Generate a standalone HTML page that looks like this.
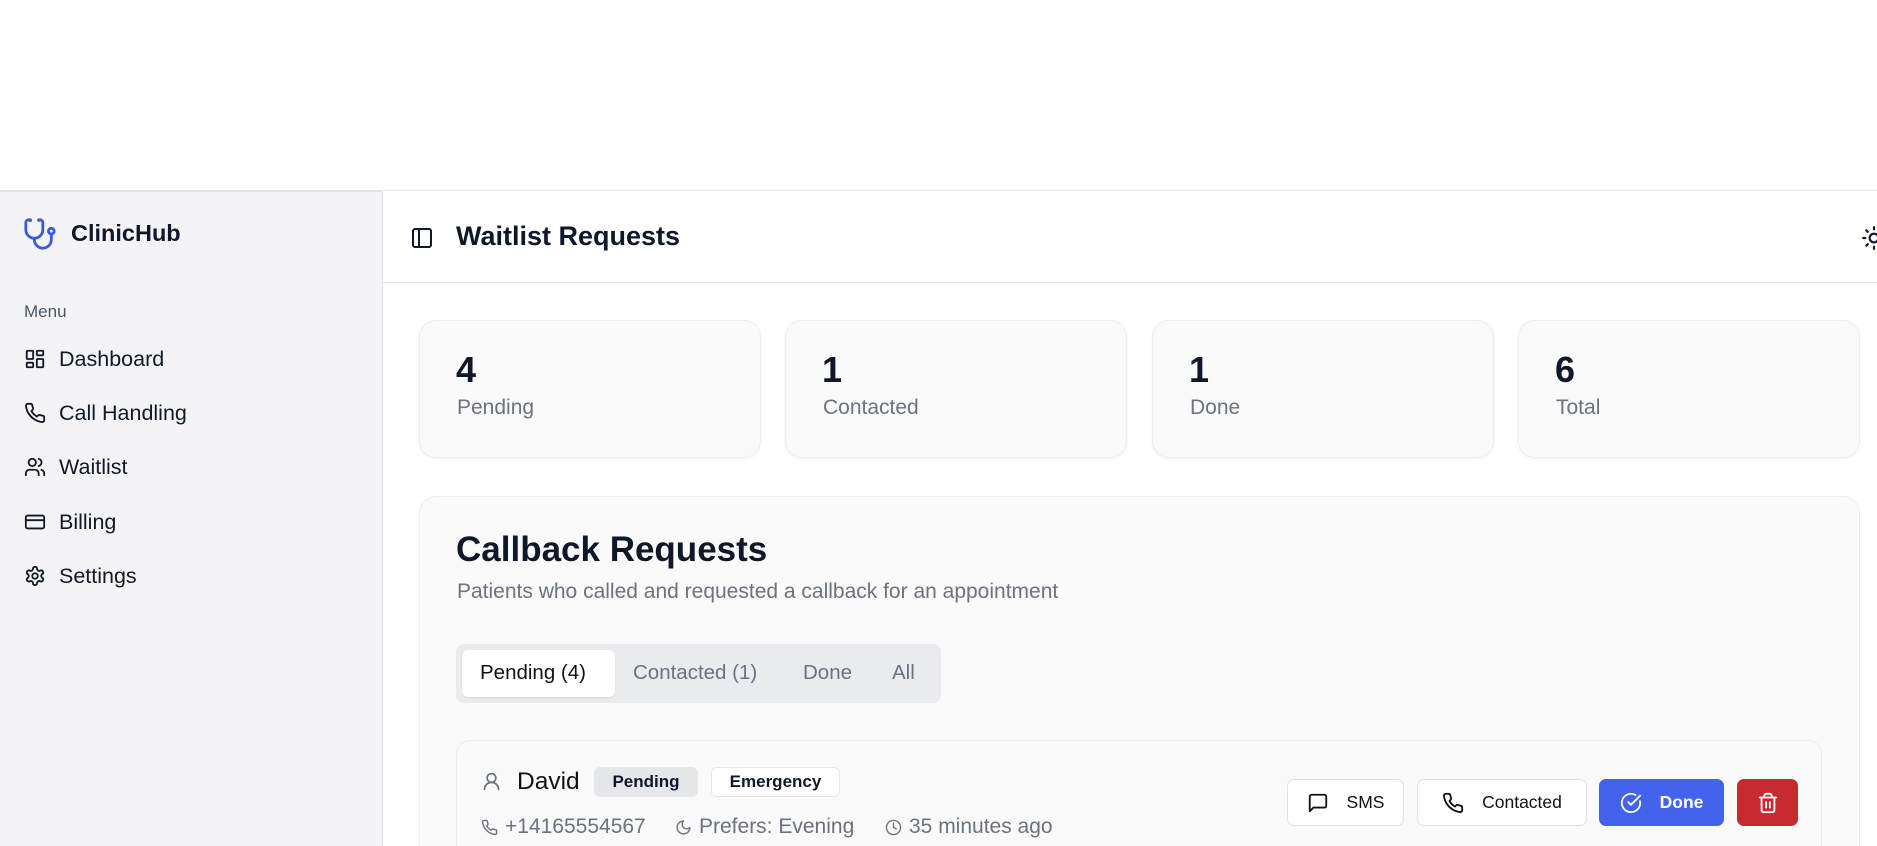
<!DOCTYPE html>
<html style="overflow:hidden;height:846px"><head><meta charset="utf-8"><style>
*{box-sizing:border-box;margin:0;padding:0}
body{width:1877px;height:846px;overflow:hidden;background:#fff;font-family:"Liberation Sans",Arial,sans-serif;color:#0f172a;position:relative}
.a{position:absolute}
svg{fill:none;stroke:currentColor;stroke-width:2;stroke-linecap:round;stroke-linejoin:round}
.side{left:0;top:191px;width:383px;height:655px;background:#f4f4f6;border-right:1px solid #e3e4e8;border-top:1px solid #e3e4e8}
.nav{left:24px;display:flex;align-items:center;font-size:21.5px;color:#111827;height:30px}
.nav svg{width:22px;height:22px;margin-right:13px}
.stat{top:320px;width:342px;height:138px;background:#fafafa;border:1px solid #eeeef0;border-radius:17px;box-shadow:0 1px 3px rgba(0,0,0,.05)}
.stat b{position:absolute;left:36px;top:28px;font-size:36px}
.stat span{position:absolute;left:37px;top:75px;font-size:21px;color:#6b7280}
.btn{top:779px;height:47px;border:1px solid #e1e2e6;border-radius:7px;background:#fff;display:flex;align-items:center;justify-content:center;font-size:17.5px;color:#111}
.btn svg{width:22px;height:22px;margin-right:18px}
.meta{top:815px;font-size:21px;color:#6b7280;display:flex;align-items:center}
.meta svg{width:17px;height:17px;margin-right:7px}
</style></head><body>
<div class="a" style="left:0;top:190px;width:1877px;border-top:1px solid #e3e4e8"></div>
<div class="a side"></div>
<svg class="a" style="left:23px;top:217px;width:34px;height:34px;color:#3b5bdb" viewBox="0 0 24 24"><path d="M4.8 2.3A.3.3 0 1 0 5 2H4a2 2 0 0 0-2 2v5a6 6 0 0 0 6 6 6 6 0 0 0 6-6V4a2 2 0 0 0-2-2h-1a.2.2 0 1 0 .3.3"/><path d="M8 15v1a6 6 0 0 0 6 6 6 6 0 0 0 6-6v-4"/><circle cx="20" cy="10" r="2"/></svg>
<div class="a" style="left:71px;top:220px;font-size:23.5px;font-weight:bold">ClinicHub</div>
<div class="a" style="left:24px;top:302px;font-size:17px;color:#4b5563">Menu</div>
<div class="a nav" style="top:344px"><svg viewBox="0 0 24 24"><rect x="3" y="3" width="7" height="9" rx="1"/><rect x="14" y="3" width="7" height="5" rx="1"/><rect x="14" y="12" width="7" height="9" rx="1"/><rect x="3" y="16" width="7" height="5" rx="1"/></svg>Dashboard</div>
<div class="a nav" style="top:398px"><svg viewBox="0 0 24 24"><path d="M22 16.9v3a2 2 0 0 1-2.2 2 19.8 19.8 0 0 1-8.6-3.1 19.5 19.5 0 0 1-6-6A19.8 19.8 0 0 1 2.1 4.2 2 2 0 0 1 4.1 2h3a2 2 0 0 1 2 1.7c.1 1 .4 1.9.7 2.8a2 2 0 0 1-.5 2.1L8.1 9.9a16 16 0 0 0 6 6l1.3-1.3a2 2 0 0 1 2.1-.4c.9.3 1.8.6 2.8.7a2 2 0 0 1 1.7 2z"/></svg>Call Handling</div>
<div class="a nav" style="top:452px"><svg viewBox="0 0 24 24"><path d="M16 21v-2a4 4 0 0 0-4-4H6a4 4 0 0 0-4 4v2"/><circle cx="9" cy="7" r="4"/><path d="M22 21v-2a4 4 0 0 0-3-3.9M16 3.1a4 4 0 0 1 0 7.8"/></svg>Waitlist</div>
<div class="a nav" style="top:507px"><svg viewBox="0 0 24 24"><rect x="2" y="5" width="20" height="14" rx="2"/><path d="M2 10h20"/></svg>Billing</div>
<div class="a nav" style="top:561px"><svg viewBox="0 0 24 24"><path d="M12.2 2h-.4a2 2 0 0 0-2 2v.2a2 2 0 0 1-1 1.7l-.4.3a2 2 0 0 1-2 0l-.2-.1a2 2 0 0 0-2.7.7l-.2.4a2 2 0 0 0 .7 2.7l.2.1a2 2 0 0 1 1 1.7v.5a2 2 0 0 1-1 1.7l-.2.1a2 2 0 0 0-.7 2.7l.2.4a2 2 0 0 0 2.7.7l.2-.1a2 2 0 0 1 2 0l.4.3a2 2 0 0 1 1 1.7v.2a2 2 0 0 0 2 2h.4a2 2 0 0 0 2-2v-.2a2 2 0 0 1 1-1.7l.4-.3a2 2 0 0 1 2 0l.2.1a2 2 0 0 0 2.7-.7l.2-.4a2 2 0 0 0-.7-2.7l-.2-.1a2 2 0 0 1-1-1.7v-.5a2 2 0 0 1 1-1.7l.2-.1a2 2 0 0 0 .7-2.7l-.2-.4a2 2 0 0 0-2.7-.7l-.2.1a2 2 0 0 1-2 0l-.4-.3a2 2 0 0 1-1-1.7V4a2 2 0 0 0-2-2z"/><circle cx="12" cy="12" r="3"/></svg>Settings</div>

<div class="a" style="left:383px;top:282px;width:1494px;border-top:1px solid #e3e4e8"></div>
<svg class="a" style="left:410px;top:226px;width:24px;height:24px" viewBox="0 0 24 24"><rect x="3" y="3" width="18" height="18" rx="2"/><path d="M9 3v18"/></svg>
<div class="a" style="left:456px;top:221px;font-size:27px;font-weight:bold">Waitlist Requests</div>
<svg class="a" style="left:1861px;top:225px;width:26px;height:26px" viewBox="0 0 24 24"><circle cx="12" cy="12" r="4"/><path d="M12 2v2M12 20v2M4.9 4.9l1.4 1.4M17.7 17.7l1.4 1.4M2 12h2M20 12h2M6.3 17.7l-1.4 1.4M19.1 4.9l-1.4 1.4"/></svg>

<div class="a stat" style="left:419px"><b>4</b><span>Pending</span></div>
<div class="a stat" style="left:785px"><b>1</b><span>Contacted</span></div>
<div class="a stat" style="left:1152px"><b>1</b><span>Done</span></div>
<div class="a stat" style="left:1518px"><b>6</b><span>Total</span></div>

<div class="a" style="left:419px;top:496px;width:1441px;height:370px;background:#fafafa;border:1px solid #eeeef0;border-radius:17px"></div>
<div class="a" style="left:456px;top:530px;font-size:35px;font-weight:bold">Callback Requests</div>
<div class="a" style="left:457px;top:580px;font-size:21px;color:#6b7280">Patients who called and requested a callback for an appointment</div>
<div class="a" style="left:456px;top:644px;width:485px;height:59px;background:#eaebef;border-radius:8px"></div>
<div class="a" style="left:462px;top:650px;width:153px;height:47px;background:#fff;border-radius:6px;box-shadow:0 1px 2px rgba(0,0,0,.08)"></div>
<div class="a" style="left:480px;top:661px;font-size:20.5px;color:#111">Pending (4)</div>
<div class="a" style="left:633px;top:661px;font-size:20.5px;color:#6b7280">Contacted (1)</div>
<div class="a" style="left:803px;top:661px;font-size:20.5px;color:#6b7280">Done</div>
<div class="a" style="left:892px;top:661px;font-size:20.5px;color:#6b7280">All</div>

<div class="a" style="left:456px;top:740px;width:1366px;height:120px;background:#fafafa;border:1px solid #ececef;border-radius:14px"></div>
<svg class="a" style="left:481px;top:771px;width:21px;height:21px;color:#6b7280" viewBox="0 0 24 24"><circle cx="12" cy="8" r="5"/><path d="M20 21a8 8 0 0 0-16 0"/></svg>
<div class="a" style="left:517px;top:768px;font-size:24.5px;color:#111">David</div>
<div class="a" style="left:594px;top:767px;width:104px;height:30px;background:#e5e7eb;border-radius:6px;font-size:17px;font-weight:bold;display:flex;align-items:center;justify-content:center">Pending</div>
<div class="a" style="left:711px;top:767px;width:129px;height:30px;background:#fff;border:1px solid #e5e7eb;border-radius:6px;font-size:17px;font-weight:bold;display:flex;align-items:center;justify-content:center">Emergency</div>
<div class="a meta" style="left:481px"><svg viewBox="0 0 24 24"><path d="M22 16.9v3a2 2 0 0 1-2.2 2 19.8 19.8 0 0 1-8.6-3.1 19.5 19.5 0 0 1-6-6A19.8 19.8 0 0 1 2.1 4.2 2 2 0 0 1 4.1 2h3a2 2 0 0 1 2 1.7c.1 1 .4 1.9.7 2.8a2 2 0 0 1-.5 2.1L8.1 9.9a16 16 0 0 0 6 6l1.3-1.3a2 2 0 0 1 2.1-.4c.9.3 1.8.6 2.8.7a2 2 0 0 1 1.7 2z"/></svg>+14165554567</div>
<div class="a meta" style="left:675px"><svg viewBox="0 0 24 24"><path d="M12 3a6 6 0 0 0 9 9 9 9 0 1 1-9-9z"/></svg>Prefers: Evening</div>
<div class="a meta" style="left:885px"><svg viewBox="0 0 24 24"><circle cx="12" cy="12" r="10"/><path d="M12 6v6l4 2"/></svg>35 minutes ago</div>

<div class="a btn" style="left:1287px;width:117px"><svg viewBox="0 0 24 24"><path d="M21 15a2 2 0 0 1-2 2H7l-4 4V5a2 2 0 0 1 2-2h14a2 2 0 0 1 2 2z"/></svg>SMS</div>
<div class="a btn" style="left:1417px;width:170px"><svg viewBox="0 0 24 24"><path d="M22 16.9v3a2 2 0 0 1-2.2 2 19.8 19.8 0 0 1-8.6-3.1 19.5 19.5 0 0 1-6-6A19.8 19.8 0 0 1 2.1 4.2 2 2 0 0 1 4.1 2h3a2 2 0 0 1 2 1.7c.1 1 .4 1.9.7 2.8a2 2 0 0 1-.5 2.1L8.1 9.9a16 16 0 0 0 6 6l1.3-1.3a2 2 0 0 1 2.1-.4c.9.3 1.8.6 2.8.7a2 2 0 0 1 1.7 2z"/></svg>Contacted</div>
<div class="a btn" style="left:1599px;width:125px;background:#4263eb;border-color:#4263eb;color:#fff;font-weight:bold"><svg viewBox="0 0 24 24"><path d="M21.8 10A10 10 0 1 1 17 3.3"/><path d="m9 11 3 3L22 4"/></svg>Done</div>
<div class="a btn" style="left:1737px;width:61px;background:#c62a2f;border-color:#c62a2f;color:#fff"><svg viewBox="0 0 24 24" style="margin:0"><path d="M3 6h18M19 6v14a2 2 0 0 1-2 2H7a2 2 0 0 1-2-2V6M8 6V4a2 2 0 0 1 2-2h4a2 2 0 0 1 2 2v2M10 11v6M14 11v6"/></svg></div>
</body></html>
